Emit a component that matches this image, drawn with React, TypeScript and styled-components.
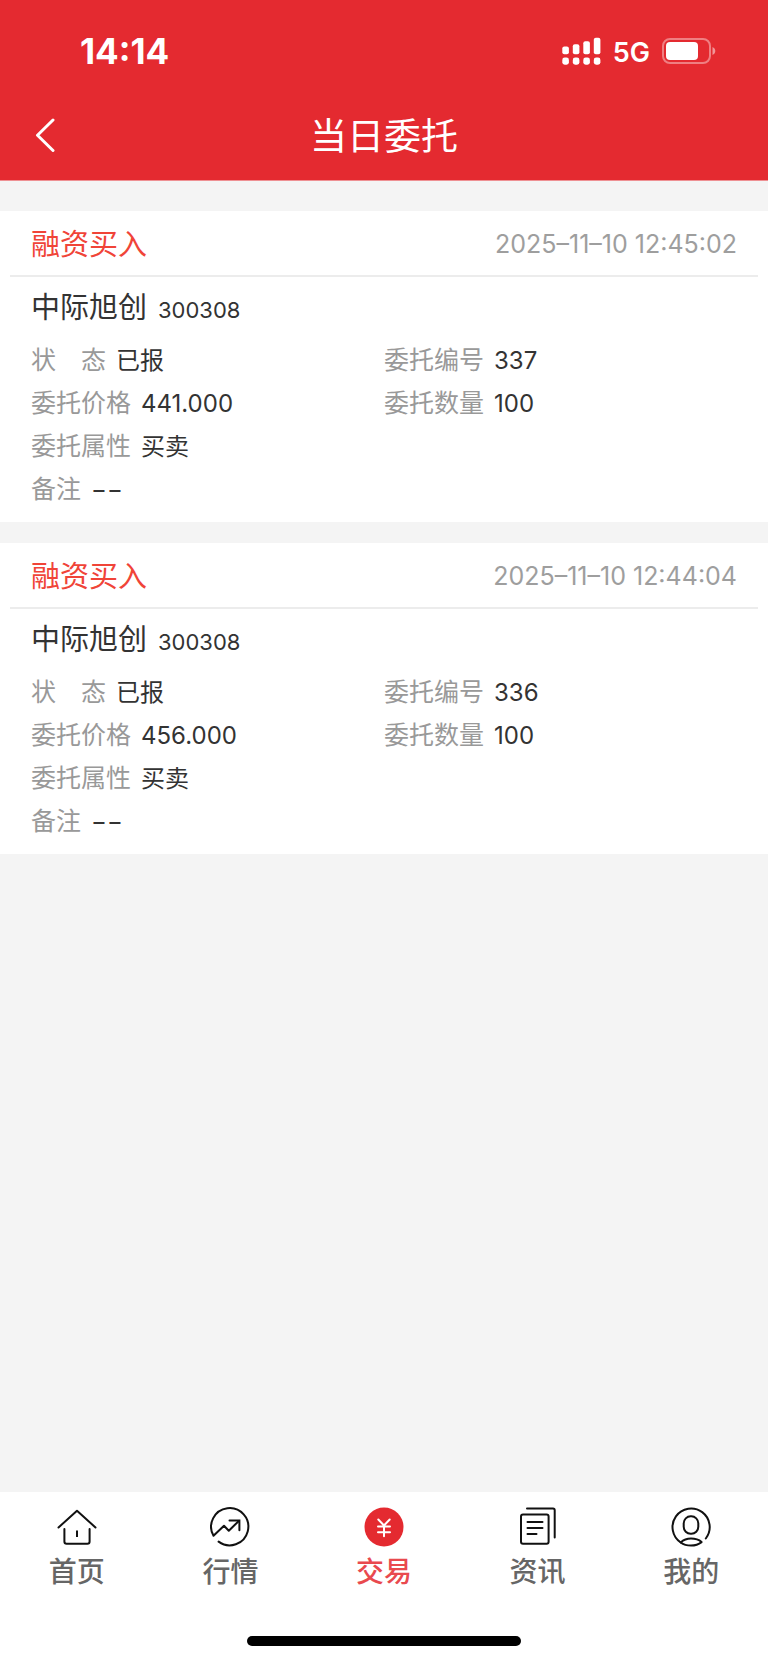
import React from "react";
import styled, { createGlobalStyle } from "styled-components";

const GlobalStyle = createGlobalStyle`
  * { box-sizing: border-box; }
  body {
    margin: 0;
    background: #f4f4f4;
    font-family: Inter, "Noto Sans CJK SC", sans-serif;
    color: #333333;
  }
`;

const Page = styled.div`
  display: flex;
  flex-direction: column;
  min-height: 100vh;
`;

const Header = styled.header`
  background: #e42a30;
  border-bottom: 1px solid #ee9093;
  color: #ffffff;
  padding-bottom: 12px;
`;

const StatusBar = styled.div`
  display: flex;
  align-items: center;
  justify-content: space-between;
  height: 102px;
  padding: 0 52px 0 80px;
`;

const Clock = styled.time`
  font-size: 35px;
  font-weight: 700;
  line-height: 40px;
`;

const StatusGroup = styled.div`
  display: flex;
  align-items: center;
  gap: 12px;
`;

const Network = styled.span`
  padding-top: 4px;
  font-size: 27px;
  font-weight: 600;
  line-height: 40px;
`;

const NavBar = styled.div`
  display: grid;
  grid-template-columns: 72px 1fr 72px;
  align-items: center;
  height: 66px;
`;

const BackButton = styled.button`
  display: flex;
  align-items: center;
  height: 66px;
  padding: 0 0 0 34px;
  border: 0;
  background: none;
  color: inherit;
`;

const Title = styled.h1`
  margin: 0;
  padding-top: 4px;
  text-align: center;
  font-size: 37px;
  font-weight: 400;
  line-height: 48px;
`;

const OrderList = styled.main`
  flex: 1;
  display: flex;
  flex-direction: column;
  gap: 21px;
  padding: 30px 0;
`;

const Card = styled.article`
  background: #ffffff;
  padding-bottom: 11px;
`;

const CardHeader = styled.div`
  display: flex;
  align-items: center;
  justify-content: space-between;
  height: 66px;
  margin: 0 10px;
  padding: 3px 21px 0;
  border-bottom: 2px solid #ececec;
`;

const Action = styled.span`
  color: #f04438;
  font-size: 29px;
  line-height: 40px;
`;

const Timestamp = styled.time`
  padding-bottom: 2px;
  color: #9e9e9e;
  font-size: 25px;
  line-height: 40px;
`;

const Stock = styled.h2`
  display: flex;
  align-items: baseline;
  gap: 11px;
  height: 62px;
  margin: 0;
  padding: 11px 31px 0;
  font-size: 29px;
  font-weight: 400;
  line-height: 40px;
`;

const StockCode = styled.span`
  font-size: 22px;
`;

const Fields = styled.dl`
  display: grid;
  grid-template-columns: 1fr 1fr;
  grid-auto-rows: 43px;
  margin: 0;
  padding: 0 31px;
`;

const Field = styled.div<{ $wide?: boolean }>`
  display: flex;
  align-items: baseline;
  gap: 10px;
  grid-column: ${(p) => (p.$wide ? "1 / -1" : "auto")};
  font-size: 25px;
  line-height: 43px;
`;

const FieldLabel = styled.dt`
  color: #999999;
`;

const FieldValue = styled.dd`
  margin: 0;
  font-size: 24px;
`;

const Footer = styled.footer`
  background: #ffffff;
  padding: 12px 0 17px;
`;

const Tabs = styled.nav`
  display: grid;
  grid-template-columns: repeat(5, 1fr);
`;

const Tab = styled.a<{ $active?: boolean }>`
  display: flex;
  flex-direction: column;
  align-items: center;
  gap: 5px;
  padding: 3px 0 44px;
  color: ${(p) => (p.$active ? "#e9494e" : "#666666")};
  font-size: 28px;
  font-weight: 500;
  line-height: 40px;
  text-decoration: none;
`;

const TabIcon = styled.svg`
  display: block;
  width: 40px;
  height: 40px;
  fill: none;
  stroke: #111111;
  stroke-width: 2;
  stroke-linecap: round;
  stroke-linejoin: round;
`;

const HomeIndicator = styled.div`
  width: 274px;
  height: 10px;
  margin: 0 auto;
  border-radius: 5px;
  background: #000000;
`;

const SignalIcon = () => (
  <svg width="39" height="28" viewBox="0 0 39 28" fill="#ffffff" aria-hidden="true">
    {[0, 1, 2, 3].map((i) => {
      const top = [9.5, 7.3, 4.2, 0.8][i];
      return (
        <g key={i}>
          <rect x={0.3 + i * 10.5} y={top} width="6.6" height={17.2 - top} rx="2" />
          <rect x={0.3 + i * 10.5} y="20.5" width="6.6" height="7.2" rx="2.4" />
        </g>
      );
    })}
  </svg>
);

const BatteryIcon = () => (
  <svg width="54" height="26" viewBox="0 0 54 26" aria-hidden="true">
    <rect x="1" y="1" width="47" height="24" rx="7" fill="none" stroke="#ffffff" strokeOpacity="0.4" strokeWidth="2" />
    <rect x="4" y="4" width="32" height="18" rx="4" fill="#ffffff" />
    <path d="M50.500 9v8c1.600-.7 2.800-2.200 2.800-4s-1.200-3.300-2.800-4z" fill="#ffffff" fillOpacity="0.5" />
  </svg>
);

const icons = {
  home: (
    <>
      <path d="M1.500 20.500 20 3.700l18.500 16.800" />
      <path d="M7.400 22v12.500a2.200 2.200 0 0 0 2.200 2.200h20.800a2.200 2.200 0 0 0 2.200-2.200V22" />
      <path d="M20 23.500v6.500" strokeLinecap="butt" />
    </>
  ),
  market: (
    <>
      <path d="M8.600 34.600A18.600 18.600 0 1 0 3.500 28.800L14 18.700l4.800 5L28.800 14" />
      <path d="M19.500 13.600h9.900v9.700" strokeLinejoin="miter" />
    </>
  ),
  trade: (
    <>
      <circle cx="20" cy="20" r="19.500" fill="#e42a30" stroke="none" />
      <path d="M14.300 12.500l5.700 6 5.700-6M20 18.500v10.700M14 19.500h12M14 25.200h12" stroke="#ffffff" />
    </>
  ),
  news: (
    <>
      <path d="M9 1.500h26a1.700 1.700 0 0 1 1.700 1.700v27.300" />
      <rect x="3" y="7.400" width="27.600" height="29.300" rx="2" />
      <path d="M9.500 15h15M9.500 21h15M9.500 27h9" />
    </>
  ),
  mine: (
    <>
      <path d="M34.800 31.500A18.600 18.600 0 1 0 9.700 35.500" />
      <rect x="12.700" y="9.300" width="14.600" height="17.500" rx="7" />
      <path d="M9.700 35.500C13 32.500 16 31.600 20 31.600s7.500.8 10.600 3.500C27.500 37.500 24 38.600 20 38.600s-7.500-1-10.300-3.100z" />
    </>
  ),
};

const tabs: { id: keyof typeof icons; label: string }[] = [
  { id: "home", label: "首页" },
  { id: "market", label: "行情" },
  { id: "trade", label: "交易" },
  { id: "news", label: "资讯" },
  { id: "mine", label: "我的" },
];

const orders = [
  { time: "2025–11–10 12:45:02", number: "337", price: "441.000" },
  { time: "2025–11–10 12:44:04", number: "336", price: "456.000" },
];

const OrderField = ({ label, value, wide }: { label: string; value: string; wide?: boolean }) => (
  <Field $wide={wide}>
    <FieldLabel>{label}</FieldLabel>
    <FieldValue>{value}</FieldValue>
  </Field>
);

export default function App() {
  return (
    <Page lang="zh-CN">
      <GlobalStyle />
      <Header>
        <StatusBar>
          <Clock>14:14</Clock>
          <StatusGroup>
            <SignalIcon />
            <Network>5G</Network>
            <BatteryIcon />
          </StatusGroup>
        </StatusBar>
        <NavBar>
          <BackButton type="button" aria-label="返回">
            <svg width="22" height="34" viewBox="0 0 22 34" fill="none" stroke="#ffffff" strokeWidth="3" strokeLinecap="round" strokeLinejoin="round">
              <path d="M19 2 3.500 17.300 19 32.500" />
            </svg>
          </BackButton>
          <Title>当日委托</Title>
        </NavBar>
      </Header>

      <OrderList>
        {orders.map((order) => (
          <Card key={order.number}>
            <CardHeader>
              <Action>融资买入</Action>
              <Timestamp>{order.time}</Timestamp>
            </CardHeader>
            <Stock>
              中际旭创 <StockCode>300308</StockCode>
            </Stock>
            <Fields>
              <OrderField label={"状\u3000态"} value="已报" />
              <OrderField label="委托编号" value={order.number} />
              <OrderField label="委托价格" value={order.price} />
              <OrderField label="委托数量" value="100" />
              <OrderField label="委托属性" value="买卖" wide />
              <OrderField label="备注" value="−−" wide />
            </Fields>
          </Card>
        ))}
      </OrderList>

      <Footer>
        <Tabs>
          {tabs.map((tab) => (
            <Tab key={tab.id} href={`#${tab.id}`} $active={tab.id === "trade"}>
              <TabIcon viewBox="0 0 40 40" aria-hidden="true">{icons[tab.id]}</TabIcon>
              {tab.label}
            </Tab>
          ))}
        </Tabs>
        <HomeIndicator />
      </Footer>
    </Page>
  );
}
